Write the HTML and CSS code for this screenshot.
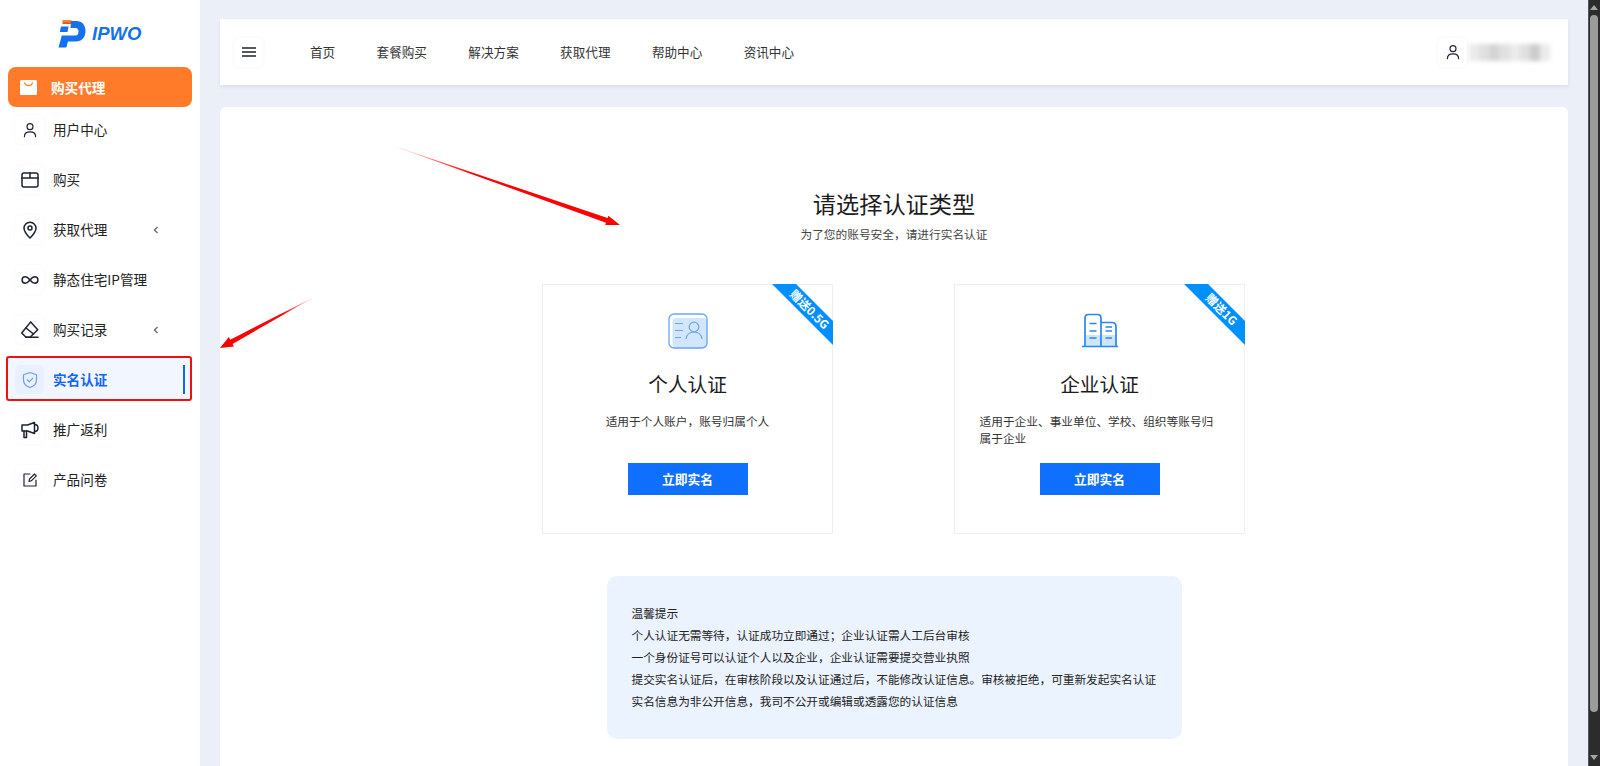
FILE: index.html
```html
<!DOCTYPE html>
<html lang="zh-CN">
<head>
<meta charset="utf-8">
<title>IPWO 实名认证</title>
<link rel="stylesheet" href="styles.css">
</head>
<body>
<div class="page">
  <aside class="sidebar">
    <div class="logo">
      <svg class="logo-mark" viewBox="0 0 28 28" width="28" height="28">
        <defs><linearGradient id="lg" x1="0" y1="0" x2="0" y2="1"><stop offset="0" stop-color="#f5a020"/><stop offset="1" stop-color="#e8452c"/></linearGradient></defs>
        <rect x="4.500" y="0" width="9" height="4" fill="url(#lg)"/>
        <path d="M13 1H18.500C24 1 27.500 5 27.500 11C27.500 17.500 23.500 21.500 18 21.500H10L8.300 27.500H.5L3.800 15.500H17.500C19.500 15.500 20.500 14 20.500 11.500C20.500 9.500 19.500 8 17.500 8H12.500Z" fill="#1570f0"/>
        <path d="M3 6.500H10.500L9.500 12H1.800Z" fill="#1570f0"/>
      </svg>
      <span class="logo-text">IPWO</span>
    </div>
    <a class="buy">
      <svg class="buy-icon" viewBox="0 0 17 15" width="17" height="15"><rect width="17" height="15" rx="1.500" fill="#fff"/><path d="M4.500 2.500C5 6.500 12 6.500 12.500 2.500" fill="none" stroke="#ff7b29" stroke-width="1.300"/></svg>
      <span class="label">购买代理</span>
    </a>
    <nav class="menu">
      <a class="item">
        <span class="ico"><svg viewBox="0 0 24 24" width="18" height="18"><circle cx="12" cy="7.500" r="4"/><path d="M4.500 21C4.500 16.500 7.500 14.500 12 14.500S19.500 16.500 19.500 21"/></svg></span>
        <span class="label">用户中心</span>
      </a>
      <a class="item">
        <span class="ico"><svg viewBox="0 0 20 20" width="20" height="20"><rect x="2" y="3" width="16" height="14" rx="2"/><path d="M2 8H18M10 3V8"/></svg></span>
        <span class="label">购买</span>
      </a>
      <a class="item">
        <span class="ico"><svg viewBox="0 0 20 20" width="20" height="20"><path d="M10 18C6.500 14.500 4 11.500 4 8.200A6 6 0 0 1 16 8.200C16 11.500 13.500 14.500 10 18Z"/><circle cx="10" cy="8" r="2"/></svg></span>
        <span class="label">获取代理</span>
        <svg class="chev" viewBox="0 0 6 10" width="6" height="10"><path d="M4.500 2L1.500 5L4.500 8"/></svg>
      </a>
      <a class="item">
        <span class="ico"><svg viewBox="0 0 20 20" width="20" height="20"><path d="M10 10C8 7.500 6.800 6.800 5.300 6.800A3.200 3.200 0 0 0 5.300 13.200C6.800 13.200 8 12.500 10 10C12 7.500 13.200 6.800 14.700 6.800A3.200 3.200 0 0 1 14.700 13.200C13.200 13.200 12 12.500 10 10Z"/></svg></span>
        <span class="label">静态住宅IP管理</span>
      </a>
      <a class="item">
        <span class="ico"><svg viewBox="0 0 20 20" width="20" height="20"><path d="M1.700 13L10.700 1.900L17.700 9.700L10 17.300H6Z"/><path d="M6 8L13.500 14M6 17.300H18"/></svg></span>
        <span class="label">购买记录</span>
        <svg class="chev" viewBox="0 0 6 10" width="6" height="10"><path d="M4.500 2L1.500 5L4.500 8"/></svg>
      </a>
      <a class="item item-active">
        <span class="mark"></span>
        <span class="ico"><svg viewBox="0 0 20 20" width="20" height="20"><path d="M10 2.500L16.500 4.800V10C16.500 13.800 13.500 16.300 10 17.500C6.500 16.300 3.500 13.800 3.500 10V4.800Z"/><path d="M7.200 9.800L9.300 11.800L12.800 8.200"/></svg></span>
        <span class="label">实名认证</span>
        <span class="bar"></span>
      </a>
      <a class="item">
        <span class="ico"><svg viewBox="0 0 20 20" width="20" height="20"><path d="M2 5H7.500L14.500 2.500V13.500L7.500 11H2Z"/><path d="M14.500 4.500C17 4.500 18 6.200 18 8S17 11.500 14.500 11.500M4 11V17.500H6.500V11"/></svg></span>
        <span class="label">推广返利</span>
      </a>
      <a class="item">
        <span class="ico"><svg class="thin" viewBox="0 0 20 20" width="20" height="20"><path d="M10 4H4V16H16V10"/><path d="M9 11.500L9.500 9L14.500 4L16.300 5.800L11.300 10.800Z"/></svg></span>
        <span class="label">产品问卷</span>
      </a>
    </nav>
  </aside>

  <main class="main">
    <header class="topbar">
      <span class="ico ico-top"><svg class="burger" viewBox="0 0 14 10" width="14" height="10"><path d="M0 1H14M0 5H14M0 9H14"/></svg></span>
      <nav class="topnav">
        <a>首页</a><a>套餐购买</a><a>解决方案</a><a>获取代理</a><a>帮助中心</a><a>资讯中心</a>
      </nav>
      <div class="user">
        <span class="ico ico-top"><svg viewBox="0 0 24 24" width="18" height="18"><circle cx="12" cy="7.500" r="4"/><path d="M4.500 21C4.500 16.500 7.500 14.500 12 14.500S19.500 16.500 19.500 21"/></svg></span>
        <span class="blur"><i class="c1"></i><i class="c2"></i><i class="c3"></i><i class="c2"></i><i class="c1"></i><i class="c2"></i><i class="c4"></i><i class="c1"></i></span>
      </div>
    </header>

    <section class="content">
      <h1 class="heading">请选择认证类型</h1>
      <p class="sub">为了您的账号安全，请进行实名认证</p>
      <div class="cards">
        <article class="card">
          <div class="ribbon"><span>赠送0.5G</span></div>
          <svg class="card-icon" viewBox="0 0 40 36" width="40" height="36">
            <rect x="4.500" y="5" width="35" height="30.500" rx="4" fill="#d2e6ff"/>
            <rect x="1" y="1" width="38" height="34" rx="5" fill="none" stroke="#6ba6f2" stroke-width="1.300"/>
            <path d="M7 10.500H15M7 17.500H15M7 24.500H13" fill="none" stroke="#6ba6f2" stroke-width="1.200"/>
            <circle cx="26" cy="14" r="4.800" fill="none" stroke="#6ba6f2" stroke-width="1.200"/>
            <path d="M18 26C18.500 21.500 22 19 26 19S33.500 21.500 34 26" fill="none" stroke="#6ba6f2" stroke-width="1.200"/>
          </svg>
          <h2 class="card-title">个人认证</h2>
          <p class="desc">适用于个人账户，账号归属个人</p>
          <a class="btn">立即实名</a>
        </article>
        <article class="card">
          <div class="ribbon"><span>赠送1G</span></div>
          <svg class="card-icon" viewBox="0 0 40 36" width="40" height="36">
            <path d="M6 22H21V33H6ZM22 22H36V33H22Z" fill="#cfe4ff"/>
            <path d="M5 33V5C5 2.800 6.500 1.500 8.500 1.500H17.500C19.500 1.500 21 2.800 21 5V33M21 9.500H32C34.500 9.500 36 11 36 13.500V33M2 33.500H38" fill="none" stroke="#2a86f2" stroke-width="1.700"/>
            <path d="M9.500 10.500H16.500M9.500 18H16.500M9.500 25H16.500M25.500 14H32M25.500 18H32M25.500 25H32" fill="none" stroke="#2a86f2" stroke-width="1.700"/>
          </svg>
          <h2 class="card-title">企业认证</h2>
          <p class="desc">适用于企业、事业单位、学校、组织等账号归属于企业</p>
          <a class="btn">立即实名</a>
        </article>
      </div>
      <div class="notice">
        <p>温馨提示</p>
        <p>个人认证无需等待，认证成功立即通过；企业认证需人工后台审核</p>
        <p>一个身份证号可以认证个人以及企业，企业认证需要提交营业执照</p>
        <p>提交实名认证后，在审核阶段以及认证通过后，不能修改认证信息。审核被拒绝，可重新发起实名认证</p>
        <p>实名信息为非公开信息，我司不公开或编辑或透露您的认证信息</p>
      </div>
    </section>
  </main>

  <div class="scrollbar">
    <span class="arrow-up"></span>
    <span class="thumb"></span>
    <span class="arrow-down"></span>
  </div>

  <svg class="annot" viewBox="0 0 1600 766" width="1600" height="766">
    <defs>
      <linearGradient id="a1" gradientUnits="userSpaceOnUse" x1="388" y1="144" x2="470" y2="173"><stop offset="0" stop-color="#ff2020" stop-opacity=".1"/><stop offset="1" stop-color="#f00"/></linearGradient>
      <linearGradient id="a2" gradientUnits="userSpaceOnUse" x1="316" y1="296" x2="282" y2="315"><stop offset="0" stop-color="#ff2020" stop-opacity=".1"/><stop offset="1" stop-color="#f00"/></linearGradient>
    </defs>
    <polygon points="388,144 607.600,218.100 608.400,215.700 620,225 605.200,225.100 606,222.700" fill="url(#a1)"/>
    <polygon points="316,296 230.260,339.700 228.800,337 220,348 234,346.600 232.540,343.900" fill="url(#a2)"/>
  </svg>
</div>
</body>
</html>
```
FILE: styles.css
```css
* { box-sizing: border-box; }
html, body { margin: 0; height: 766px; overflow: hidden; }
body {
  font-family: "Noto Sans CJK SC", "Noto Sans", "Liberation Sans", sans-serif;
  color: #222;
  background: #ebeff8;
}
h1, h2, p { margin: 0; font-weight: 400; }
a { color: inherit; text-decoration: none; }

.page { position: relative; display: flex; height: 766px; overflow: hidden; }

/* Sidebar */
.sidebar { flex: 0 0 200px; background: #fff; }
.logo { height: 67px; display: flex; align-items: flex-start; padding: 20px 0 0 58px; gap: 6px; }
.logo-mark { display: block; }
.logo-text {
  font-family: "Liberation Sans", sans-serif;
  font-style: italic;
  font-weight: 700;
  font-size: 18.500px;
  line-height: 24px;
  margin-top: 2px;
  color: #1570f0;
}
.buy {
  height: 40px;
  margin: 0 8px;
  padding-left: 12px;
  display: flex;
  align-items: center;
  gap: 14px;
  border-radius: 8px;
  background: #ff7b29;
  color: #fff;
  font-size: 13.600px;
  font-weight: 700;
}
.label { position: relative; padding-bottom: 1px; }
.menu { padding: 8px 15px 0; display: flex; flex-direction: column; gap: 21px; }
.item {
  position: relative;
  height: 29px;
  display: flex;
  align-items: center;
  gap: 9px;
  font-size: 13.600px;
  color: #222;
}
.ico {
  position: relative;
  flex: 0 0 29px;
  height: 29px;
  display: flex;
  align-items: center;
  justify-content: center;
  border-radius: 6px;
  background: #fff;
  box-shadow: 0 0 3px rgba(30, 50, 90, .04);
}
.ico svg { fill: none; stroke: #1c2230; stroke-width: 1.500; stroke-linejoin: round; stroke-linecap: round; }
.ico svg.thin { stroke-width: 1.200; }
.chev { margin-left: auto; margin-right: 26px; fill: none; stroke: #666; stroke-width: 1.300; }
.item-active { color: #1464f4; font-weight: 700; }
.item-active .ico { background: #e9f1ff; box-shadow: none; }
.item-active .ico svg { stroke: #6f9df0; stroke-width: 1.200; }
.mark {
  position: absolute;
  inset: -9px -7px -7px -9px;
  border: 2.500px solid #f01010;
  border-radius: 3px;
  background: #f1f6ff;
}
.bar { position: relative; margin-left: auto; width: 2.500px; height: 29px; background: #1464f4; }

/* Main */
.main { flex: 1; min-width: 0; padding: 19px 20px 0 20px; display: flex; flex-direction: column; gap: 22px; }
.topbar {
  flex: 0 0 66px;
  display: flex;
  align-items: center;
  padding: 0 18px 0 14px;
  background: #fff;
  box-shadow: 0 2px 4px rgba(40, 50, 80, .08);
}
.ico-top { box-shadow: 0 0 4px rgba(30, 50, 90, .05); }
.ico svg.burger { stroke-width: 1.400; stroke-linecap: butt; }
.topnav { margin-left: 47px; padding-bottom: 2px; display: flex; gap: 41.400px; font-size: 12.600px; color: #333; }
.user { margin-left: auto; display: flex; align-items: center; gap: 2px; }
.blur { display: flex; width: 81px; height: 17px; overflow: hidden; filter: blur(2px); }
.blur i { flex: 1; }
.c1 { background: #ebebeb; }
.c2 { background: #e0e0e0; }
.c3 { background: #d4d4d4; }
.c4 { background: #cccccc; }

.content {
  flex: 1;
  background: #fff;
  border-radius: 6px 6px 0 0;
  padding-top: 80px;
  display: flex;
  flex-direction: column;
  align-items: center;
}
.heading { font-size: 23.200px; line-height: 32px; color: #1c1c1c; }
.sub { margin-top: 6px; font-size: 11.700px; line-height: 17px; color: #444; }
.cards { margin: 42px 1px 0 0; display: flex; gap: 121px; }
.card {
  position: relative;
  width: 291px;
  height: 250px;
  padding-top: 28px;
  border: 1px solid #eeeeee;
  display: flex;
  flex-direction: column;
  align-items: center;
}
.ribbon {
  position: absolute;
  top: -1px;
  right: -1px;
  width: 61px;
  height: 61px;
  background: #0090fb;
  clip-path: polygon(0 0, 24px 0, 61px 37px, 61px 61px);
}
.ribbon span {
  position: absolute;
  left: 0;
  top: 17px;
  width: 72px;
  text-align: center;
  font-size: 11.700px;
  line-height: 16px;
  font-weight: 700;
  color: #fff;
  transform: translate(2px, 0) rotate(45deg);
}
.card-icon { display: block; }
.card-title { margin-top: 21px; font-size: 19.700px; line-height: 28px; color: #1c1c1c; }
.desc {
  margin-top: 14px;
  max-width: 240px;
  height: 34px;
  font-size: 11.700px;
  line-height: 17px;
  color: #333;
}
.btn {
  margin-top: 17px;
  width: 120px;
  height: 32px;
  display: flex;
  align-items: center;
  justify-content: center;
  background: #0f6fff;
  color: #fff;
  font-size: 12.800px;
  font-weight: 700;
  padding-bottom: 1px;
}
.notice {
  margin-top: 42px;
  width: 575px;
  padding: 26px 25px 27px;
  border-radius: 10px;
  background: #ebf3ff;
  font-size: 11.660px;
  line-height: 22px;
  color: #222;
}

/* Scrollbar */
.scrollbar {
  flex: 0 0 12px;
  background: #2c2c2c;
  border-left: 1px solid #555;
  display: flex;
  flex-direction: column;
  align-items: center;
  padding: 5px 1px 6px 0;
}
.arrow-up { width: 0; height: 0; border: 4px solid transparent; border-top: 0; border-bottom: 5px solid #a5a5a5; }
.arrow-down { width: 0; height: 0; border: 4px solid transparent; border-bottom: 0; border-top: 5px solid #a5a5a5; }
.thumb { width: 8px; height: 698px; margin: 5px 0 43px; border-radius: 4px; background: #9b9b9b; }

/* Annotation overlay */
.annot { position: absolute; left: 0; top: 0; pointer-events: none; }
```
